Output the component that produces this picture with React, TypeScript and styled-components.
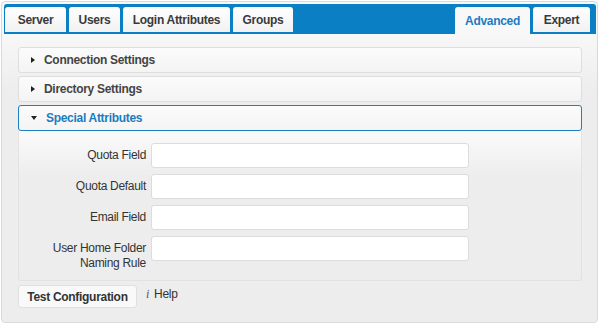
import { useState } from "react";
import styled, { createGlobalStyle } from "styled-components";

const GlobalStyle = createGlobalStyle`
  html, body {
    margin: 0;
    padding: 0;
    background: #ffffff;
    font-family: "Liberation Sans", Arial, sans-serif;
    color: #333;
  }
`;

const leftTabs = [
  { name: "Server", width: 61 },
  { name: "Users", width: 51 },
  { name: "Login Attributes", width: 107 },
  { name: "Groups", width: 60 },
];
const rightTabs = [
  { name: "Advanced", width: 75 },
  { name: "Expert", width: 57 },
];

const sections = [
  { id: "connection", title: "Connection Settings" },
  { id: "directory", title: "Directory Settings" },
  { id: "special", title: "Special Attributes" },
];

const fields = [
  { id: "quotaField", label: ["Quota Field"] },
  { id: "quotaDefault", label: ["Quota Default"] },
  { id: "emailField", label: ["Email Field"] },
  { id: "homeFolder", label: ["User Home Folder", "Naming Rule"] },
];

function App() {
  const [tab, setTab] = useState("Advanced");
  const [open, setOpen] = useState<string | null>("special");

  return (
    <>
      <GlobalStyle />
      <Panel>
        <TabBar>
          <TabGroup>
            {leftTabs.map((t) => (
              <Tab
                key={t.name}
                $width={t.width}
                $active={tab === t.name}
                onClick={() => setTab(t.name)}
              >
                {t.name}
              </Tab>
            ))}
          </TabGroup>
          <TabGroup>
            {rightTabs.map((t) => (
              <Tab
                key={t.name}
                $width={t.width}
                $active={tab === t.name}
                onClick={() => setTab(t.name)}
              >
                {t.name}
              </Tab>
            ))}
          </TabGroup>
        </TabBar>

        <Content>
          <Accordion>
            {sections.map((s) => {
              const isOpen = open === s.id;
              return (
                <Section key={s.id}>
                  <Header
                    $open={isOpen}
                    onClick={() => setOpen(isOpen ? null : s.id)}
                  >
                    <Caret $open={isOpen} />
                    {s.title}
                  </Header>
                  {isOpen && (
                    <Body>
                      {fields.map((f) => (
                        <FieldRow key={f.id}>
                          <Label htmlFor={f.id}>
                            {f.label.map((l) => (
                              <span key={l}>{l}</span>
                            ))}
                          </Label>
                          <Input id={f.id} type="text" />
                        </FieldRow>
                      ))}
                    </Body>
                  )}
                </Section>
              );
            })}
          </Accordion>

          <Footer>
            <Button>Test Configuration</Button>
            <HelpLink>
              <InfoIcon>i</InfoIcon>Help
            </HelpLink>
          </Footer>
        </Content>
      </Panel>
    </>
  );
}

export default App;

const Panel = styled.div`
  margin: 1px;
  width: 597px;
  height: 322px;
  border: 1px solid #d9d9d9;
  border-radius: 4px;
  padding: 2px 1px 0 2px;
  box-sizing: border-box;
  background: linear-gradient(#f8f8f8 30px, #ededed 90px);
  display: flex;
  flex-direction: column;
`;

const TabBar = styled.div`
  height: 30px;
  box-sizing: border-box;
  background: #0a7fc4;
  border-radius: 3px 3px 0 0;
  padding: 3px 6px 0 1px;
  display: flex;
  justify-content: space-between;
  align-items: flex-start;
`;

const TabGroup = styled.div`
  display: flex;
  gap: 3px;
`;

const Tab = styled.button<{ $active?: boolean; $width: number }>`
  width: ${(p) => p.$width}px;
  height: ${(p) => (p.$active ? "27px" : "25px")};
  padding: 0;
  border: none;
  border-radius: 3px 3px 0 0;
  background: ${(p) =>
    p.$active ? "#f8f8f8" : "linear-gradient(#ffffff, #f1f1f1)"};
  font-family: "Liberation Sans", Arial, sans-serif;
  font-size: 12px;
  font-weight: bold;
  letter-spacing: -0.3px;
  white-space: nowrap;
  color: ${(p) => (p.$active ? "#1b7cc0" : "#3a3a3a")};
  cursor: pointer;
`;

const Content = styled.div`
  flex: 1;
  padding: 13px 14px 0 14px;
  display: flex;
  flex-direction: column;
`;

const Accordion = styled.div`
  display: flex;
  flex-direction: column;
  gap: 3px;
`;

const Section = styled.div`
  display: flex;
  flex-direction: column;
`;

const Header = styled.div<{ $open?: boolean }>`
  height: 26px;
  box-sizing: border-box;
  display: flex;
  align-items: center;
  padding-left: 12px;
  gap: 9px;
  border: 1px solid ${(p) => (p.$open ? "#1f7fc2" : "#dedede")};
  border-radius: 3px;
  background: linear-gradient(#fbfbfb, #f4f4f4);
  font-size: 12px;
  font-weight: bold;
  letter-spacing: -0.3px;
  color: ${(p) => (p.$open ? "#1b7cc0" : "#444")};
  cursor: pointer;
`;

const Caret = styled.span<{ $open?: boolean }>`
  width: 0;
  height: 0;
  ${(p) =>
    p.$open
      ? `border-left: 3.5px solid transparent;
         border-right: 3.5px solid transparent;
         border-top: 4px solid #222;`
      : `border-top: 3.5px solid transparent;
         border-bottom: 3.5px solid transparent;
         border-left: 4px solid #222;`}
`;

const Body = styled.div`
  border: 1px solid #e2e2e2;
  border-top: none;
  border-radius: 0 0 3px 3px;
  background: linear-gradient(#f9f9f9 5px, #ededed 45px);
  padding: 12px 0 9px 0;
  display: flex;
  flex-direction: column;
  gap: 6px;
`;

const FieldRow = styled.div`
  display: grid;
  grid-template-columns: 127px 318px;
  column-gap: 5px;
  align-items: start;
`;

const Label = styled.label`
  display: flex;
  flex-direction: column;
  align-items: flex-end;
  font-size: 12px;
  letter-spacing: -0.3px;
  line-height: 15px;
  color: #333;
  padding-top: 5px;
`;

const Input = styled.input`
  height: 25px;
  box-sizing: border-box;
  border: 1px solid #dcdcdc;
  border-radius: 3px;
  background: #fff;
  outline: none;
`;

const Footer = styled.div`
  display: flex;
  align-items: center;
  gap: 9px;
  margin-top: 4px;
`;

const Button = styled.button`
  height: 23px;
  width: 119px;
  border: 1px solid #e0e0e0;
  border-radius: 3px;
  background: #f9f9f9;
  font-family: "Liberation Sans", Arial, sans-serif;
  font-size: 12px;
  font-weight: bold;
  letter-spacing: -0.3px;
  color: #333;
  cursor: pointer;
`;

const HelpLink = styled.span`
  display: flex;
  align-items: baseline;
  gap: 5px;
  font-size: 12px;
  letter-spacing: -0.3px;
  color: #333;
  margin-top: -4px;
`;

const InfoIcon = styled.i`
  font-family: "Liberation Serif", serif;
  font-size: 12px;
  color: #555;
`;
